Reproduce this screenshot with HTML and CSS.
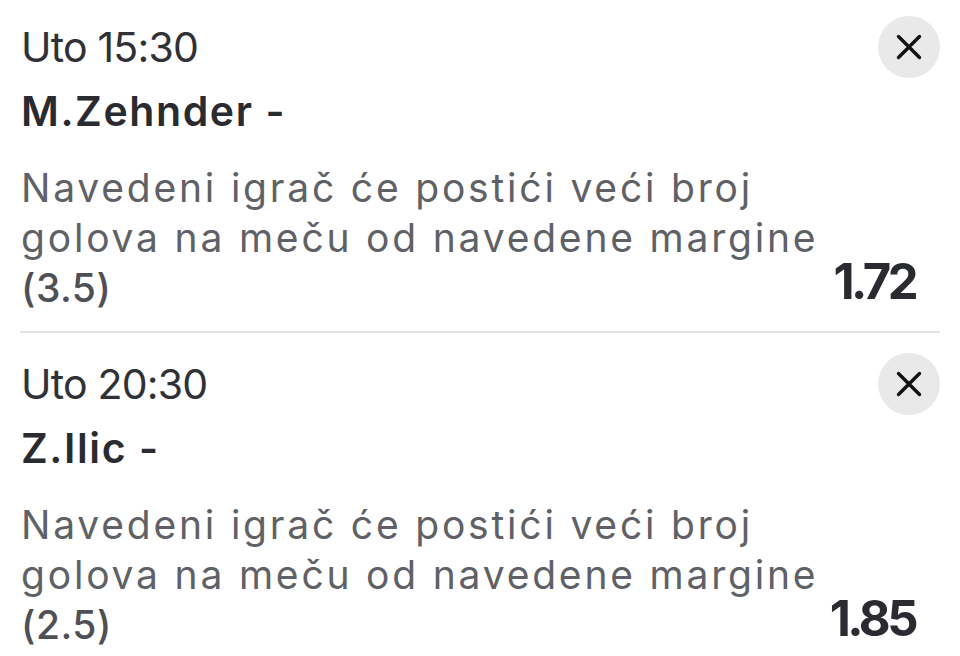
FILE: index.html
```html
<!DOCTYPE html>
<html lang="sr">
<head>
<meta charset="utf-8">
<title>Tiket</title>
<link rel="stylesheet" href="styles.css">
</head>
<body>
<div class="list">
  <div class="bet bet-first">
    <div class="info">
      <div class="time">Uto 15:30</div>
      <div class="name">M.Zehnder -</div>
      <div class="desc">Navedeni igrač će postići veći broj golova na meču od navedene margine <span class="margin">(3.5)</span></div>
    </div>
    <div class="side">
      <button class="close" aria-label="Ukloni">
        <svg width="26" height="26" viewBox="0 0 26 26"><path d="M2.5 2.5 L23.5 23.5 M23.5 2.5 L2.5 23.5" stroke="#111" stroke-width="3.4" stroke-linecap="round" fill="none"/></svg>
      </button>
      <div class="odds">1.72</div>
    </div>
  </div>
  <div class="bet">
    <div class="info">
      <div class="time">Uto 20:30</div>
      <div class="name">Z.Ilic -</div>
      <div class="desc">Navedeni igrač će postići veći broj golova na meču od navedene margine <span class="margin">(2.5)</span></div>
    </div>
    <div class="side">
      <button class="close" aria-label="Ukloni">
        <svg width="26" height="26" viewBox="0 0 26 26"><path d="M2.5 2.5 L23.5 23.5 M23.5 2.5 L2.5 23.5" stroke="#111" stroke-width="3.4" stroke-linecap="round" fill="none"/></svg>
      </button>
      <div class="odds">1.85</div>
    </div>
  </div>
</div>
</body>
</html>
```
FILE: styles.css
```css
html, body {
  margin: 0;
  padding: 0;
  background: #ffffff;
}
body {
  font-family: Inter, Lato, sans-serif;
  width: 960px;
  height: 656px;
  overflow: hidden;
}
.list {
  padding: 0 20px;
}
.bet {
  display: flex;
  justify-content: space-between;
  padding: 26px 0 18px;
}
.bet-first {
  padding-top: 22px;
  border-bottom: 2px solid #e2e2e2;
}
.info {
  flex: 1;
  min-width: 0;
  padding-left: 1px;
}
.time {
  font-size: 41px;
  line-height: 50px;
  letter-spacing: -0.8px;
  color: #303136;
}
.name {
  font-size: 41px;
  line-height: 50px;
  font-weight: 600;
  letter-spacing: 1.6px;
  color: #2a2b30;
  margin-top: 14px;
}
.desc {
  font-size: 39px;
  line-height: 50px;
  letter-spacing: 2.8px;
  color: #606166;
  margin-top: 27px;
}
.margin {
  font-weight: 500;
  letter-spacing: 0.5px;
  color: #4f5055;
}
.side {
  display: flex;
  flex-direction: column;
  align-items: flex-end;
  justify-content: space-between;
}
.close {
  width: 62px;
  height: 62px;
  border-radius: 50%;
  border: none;
  background: #e9e9e9;
  display: flex;
  align-items: center;
  justify-content: center;
  margin-top: -6px;
  padding: 0;
}
.odds {
  font-size: 49px;
  line-height: 50px;
  font-weight: 700;
  letter-spacing: -3.5px;
  color: #2a2b30;
  margin-right: 25px;
  margin-bottom: 6px;
}
```
